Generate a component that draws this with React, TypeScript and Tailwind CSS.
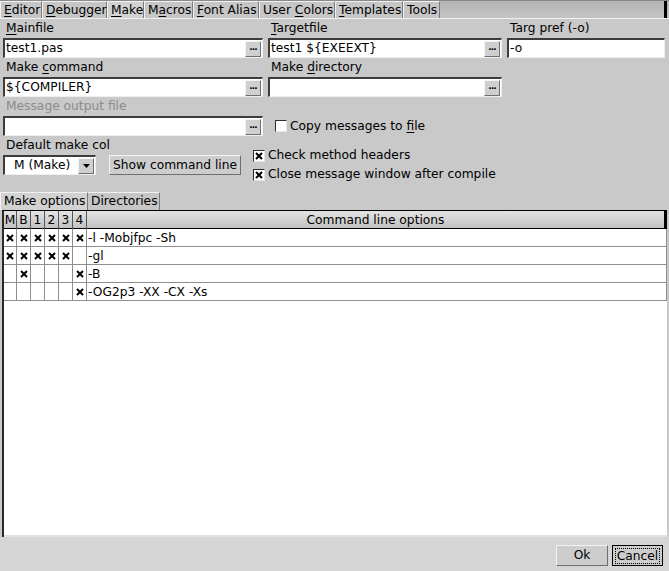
import React from "react";

const font = { fontFamily: '"DejaVu Sans", "Liberation Sans", sans-serif' };

function U({ children }: { children: React.ReactNode }) {
  return <span className="underline underline-offset-[2px] decoration-1">{children}</span>;
}

type TabDef = { w: number; label: React.ReactNode; active?: boolean };

const tabs: TabDef[] = [
  { w: 42, label: <><U>E</U>ditor</> },
  { w: 65, label: <><U>D</U>ebugger</> },
  { w: 37, label: <><U>M</U>ake</>, active: true },
  { w: 49, label: <>M<U>a</U>cros</> },
  { w: 66, label: <><U>F</U>ont Alias</> },
  { w: 76, label: <>User <U>C</U>olors</> },
  { w: 68, label: <><U>T</U>emplates</> },
  { w: 37, label: <>Tools</> },
];

function Tab({ w, label, active }: TabDef) {
  return (
    <div
      style={{ width: w }}
      className={
        "h-full flex items-center pl-[3px] border-l border-t border-l-[#f2f2f2] border-t-[#f2f2f2] border-r border-r-[#7a7a7a] whitespace-pre " +
        (active ? "bg-[#d2d2d2]" : "bg-[#c6c6c6]")
      }
    >
      <span>{label}</span>
    </div>
  );
}

function Browse() {
  return (
    <div className="w-[16px] h-[16px] mr-[1px] flex items-center justify-center bg-[#cfcfcf] border border-t-[#f4f4f4] border-l-[#f4f4f4] border-r-[#6f6f6f] border-b-[#6f6f6f]">
      <span className="text-[9px] font-bold leading-none tracking-[-1px] -mt-[3px]">...</span>
    </div>
  );
}

function Input({ value, browse, w }: { value?: string; browse?: boolean; w: number }) {
  return (
    <div
      style={{ width: w }}
      className="h-[20px] shrink-0 flex items-center bg-white border-t-2 border-l-2 border-t-[#3c3c3c] border-l-[#3c3c3c] border-b border-r border-b-[#efefef] border-r-[#efefef]"
    >
      <span className="flex-1 pl-[1px] whitespace-pre leading-none">{value}</span>
      {browse && <Browse />}
    </div>
  );
}

function Label({ children, dim }: { children: React.ReactNode; dim?: boolean }) {
  return (
    <div className={"h-[19px] shrink-0 flex items-center pl-[3px] whitespace-pre " + (dim ? "text-[#8c8c8c]" : "")}>
      <span>{children}</span>
    </div>
  );
}

function Check({ checked, label }: { checked?: boolean; label: React.ReactNode }) {
  return (
    <div className="flex items-center h-[19px] shrink-0 whitespace-pre">
      <div className="w-[12px] h-[12px] bg-white border-t border-l border-t-[#2c2c2c] border-l-[#2c2c2c] border-b border-r border-b-[#e6e6e6] border-r-[#e6e6e6] flex items-center justify-center mr-[3px]">
        {checked && (
          <svg width="8" height="8" viewBox="0 0 8 8">
            <path d="M1 1 L7 7 M7 1 L1 7" stroke="#000" strokeWidth="2" />
          </svg>
        )}
      </div>
      <span>{label}</span>
    </div>
  );
}

function XMark() {
  return (
    <svg width="8" height="8" viewBox="0 0 8 8">
      <path d="M1 1 L7 7 M7 1 L1 7" stroke="#000" strokeWidth="2" />
    </svg>
  );
}

const rows: { flags: boolean[]; opts: string }[] = [
  { flags: [true, true, true, true, true, true], opts: "-l -Mobjfpc -Sh" },
  { flags: [true, true, true, true, true, false], opts: "-gl" },
  { flags: [false, true, false, false, false, true], opts: "-B" },
  { flags: [false, false, false, false, false, true], opts: "-OG2p3 -XX -CX -Xs" },
];

const headers = ["M", "B", "1", "2", "3", "4"];
const cols = "grid grid-cols-[13px_14px_14px_14px_14px_14px_1fr]";

export default function App() {
  return (
    <div style={font} className="w-[669px] h-[571px] flex flex-col bg-[#c9c9c9] text-[12.25px] text-black overflow-hidden">
      {/* tab strip */}
      <div className="h-[19px] shrink-0 flex bg-gradient-to-b from-[#b4b4b4] to-[#c4c4c4] border-t border-t-[#8a8a8a] border-b border-b-[#f0f0f0]">
        {tabs.map((t, i) => (
          <Tab key={i} {...t} />
        ))}
        <div className="flex-1" />
        <div className="w-[3px] bg-black" />
        <div className="w-[2px]" />
      </div>

      {/* form fields */}
      <div className="h-[159px] shrink-0 flex pl-[3px]">
        <div className="w-[260px] flex flex-col">
          <Label><U>M</U>ainfile</Label>
          <Input w={260} value="test1.pas" browse />
          <Label>Make <U>c</U>ommand</Label>
          <Input w={260} value="${COMPILER}" browse />
          <Label dim>Message output file</Label>
          <Input w={260} browse />
          <Label>Default make col</Label>
          <div className="flex items-center h-[20px] shrink-0">
            <div className="w-[93px] h-[20px] flex items-center bg-white border-t-2 border-l-2 border-t-[#3c3c3c] border-l-[#3c3c3c] border-b border-r border-b-[#efefef] border-r-[#efefef]">
              <span className="flex-1 pl-[9px] whitespace-nowrap">M (Make)</span>
              <div className="w-[16px] h-[16px] mr-[1px] flex items-center justify-center bg-[#cfcfcf] border border-t-[#f4f4f4] border-l-[#f4f4f4] border-r-[#6f6f6f] border-b-[#6f6f6f]">
                <svg width="7" height="4" viewBox="0 0 7 4">
                  <path d="M0 0 H7 L3.5 4 Z" fill="#000" />
                </svg>
              </div>
            </div>
            <div className="ml-[13px] w-[132px] h-[20px] flex items-center justify-center bg-[#cdcdcd] border border-t-[#f4f4f4] border-l-[#f4f4f4] border-r-[#6f6f6f] border-b-[#6f6f6f] whitespace-nowrap">
              Show command line
            </div>
          </div>
        </div>
        <div className="ml-[5px] w-[234px] flex flex-col">
          <Label><U>T</U>argetfile</Label>
          <Input w={234} value="test1 ${EXEEXT}" browse />
          <Label>Make <U>d</U>irectory</Label>
          <Input w={234} browse />
          <div className="h-[19px] shrink-0" />
          <div className="h-[20px] shrink-0 flex items-center pl-[7px]">
            <Check label={<>Copy messages to <U>f</U>ile</>} />
          </div>
          <div className="ml-[-15px] mt-[10px] flex flex-col">
            <Check checked label="Check method headers" />
            <Check checked label="Close message window after compile" />
          </div>
        </div>
        <div className="ml-[5px] w-[158px] flex flex-col">
          <Label>Targ pref (-o)</Label>
          <Input w={158} value="-o" />
        </div>
      </div>

      {/* options notebook */}
      <div className="mt-[14px] h-[18px] shrink-0 flex">
        <div className="w-[88px] h-full flex items-center pl-[3px] bg-[#d2d2d2] border-t border-l border-t-[#f2f2f2] border-l-[#f2f2f2] border-r border-r-[#7a7a7a] whitespace-nowrap">
          Make options
        </div>
        <div className="w-[72px] h-full flex items-center pl-[3px] bg-[#c6c6c6] border-t border-t-[#f2f2f2] border-r border-r-[#7a7a7a] whitespace-nowrap">
          Directories
        </div>
      </div>

      <div className="flex-1 flex flex-col ml-[2px] mr-[2px] bg-white border-l-2 border-l-[#2a2a2a] border-t border-t-black">
        <div className={cols + " h-[18px] bg-gradient-to-b from-[#e4e4e4] to-[#c2c2c2] border-b border-b-black"}>
          {headers.map((h) => (
            <div key={h} className="flex items-center justify-center border-r border-r-[#555]">
              {h}
            </div>
          ))}
          <div className="flex items-center justify-center border-r-[3px] border-r-black">Command line options</div>
        </div>
        {rows.map((r, i) => (
          <div key={i} className={cols + " h-[18px] border-b border-b-[#8e8e8e]"}>
            {r.flags.map((f, j) => (
              <div key={j} className="flex items-center justify-center border-r border-r-[#8e8e8e]">
                {f && <XMark />}
              </div>
            ))}
            <div className="flex items-center pl-[1px] whitespace-pre border-r border-r-[#8e8e8e]">{r.opts}</div>
          </div>
        ))}
        <div className="flex-1" />
        <div className="h-[2px] bg-[#e2e2e2]" />
      </div>

      {/* dialog buttons */}
      <div className="h-[34px] shrink-0 bg-[#d5d5d5] flex items-start pt-[8px] justify-end pr-[6px] gap-[4px]">
        <div className="w-[52px] h-[21px] flex items-center justify-center bg-[#cdcdcd] border border-t-[#f4f4f4] border-l-[#f4f4f4] border-r-[#6f6f6f] border-b-[#6f6f6f]">
          Ok
        </div>
        <div className="w-[51px] h-[21px] flex items-center justify-center bg-[#cdcdcd] border border-black">
          <span className="outline-1 outline-dotted outline-black px-[1px] leading-[14px]">Cancel</span>
        </div>
      </div>
    </div>
  );
}
